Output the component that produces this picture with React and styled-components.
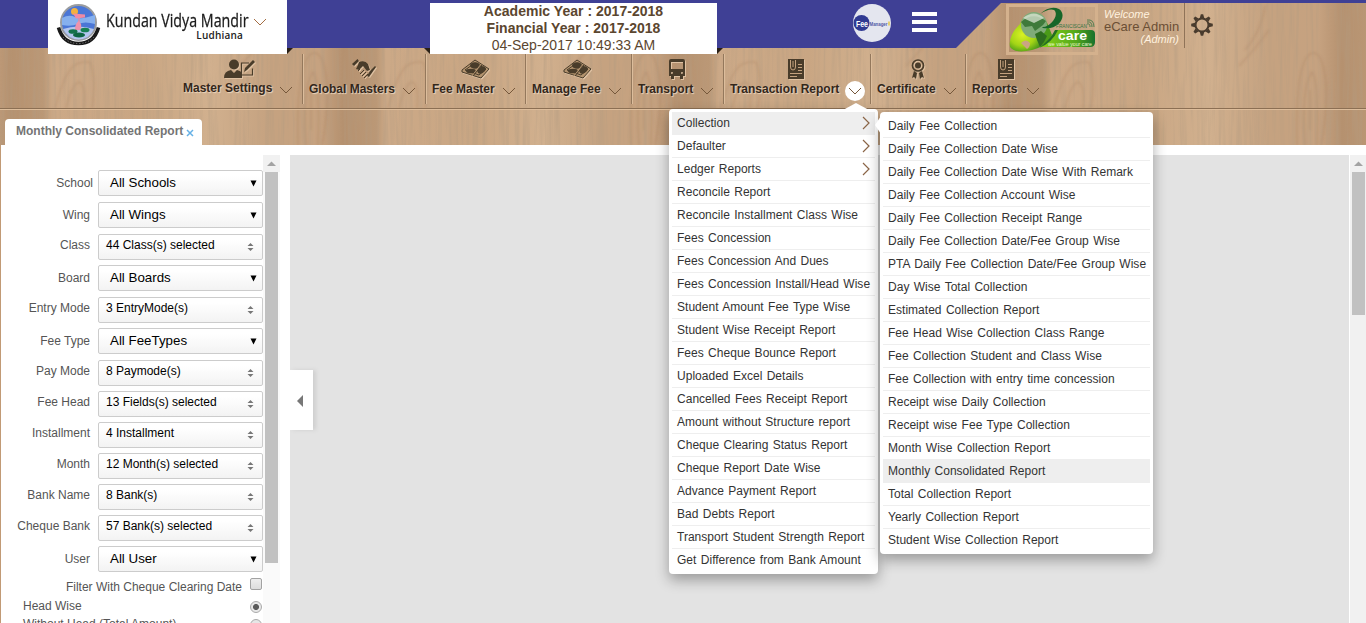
import React from "react";
import styled, { createGlobalStyle, css } from "styled-components";

const GlobalStyle = createGlobalStyle`
  * { box-sizing: border-box; }
  html, body { margin: 0; background: #fff; overflow: hidden; }
  body { font: 12px "Liberation Sans", Arial, sans-serif; color: #333; }
`;

const Page = styled.div`
  width: 1366px;
  height: 623px;
  display: flex;
  flex-direction: column;
  overflow: hidden;
`;
const Header = styled.header`
  position: relative;
  z-index: 2;
  flex: none;
  height: 145px;
  background: #c6a585;
`;
const WoodArt = styled.svg`
  position: absolute;
  inset: 0;
  z-index: -1;
`;
const TopBar = styled.div`
  display: flex;
  height: 48px;
`;
const cornerFold = css`
  content: "";
  position: absolute;
  bottom: 0;
  border-top: 6px solid #2b2117;
`;
const SchoolBox = styled.div`
  position: relative;
  flex: none;
  display: flex;
  margin-left: 48px;
  width: 239px;
  height: 54px;
  padding: 3px 0 0 8px;
  background: #fff;
  > svg { flex: none; }
  &::after { ${cornerFold} left: 100%; border-right: 6px solid transparent; }
`;
const SchoolText = styled.div`
  flex: none;
  width: 138px;
  margin-left: 5px;
  padding-top: 5px;
`;
const SchoolName = styled.div`
  font: 19px/24px "Open Sans", sans-serif;
  width: 184px;
  transform: scaleX(${(p) => p.$squeeze});
  transform-origin: left;
  white-space: nowrap;
  color: #1c1c1c;
  -webkit-text-stroke: 0.3px #1c1c1c;
`;
const City = styled.div`
  margin-top: -3px;
  padding-right: 1px;
  text-align: right;
  font: 600 10px/13px "Open Sans", sans-serif;
  letter-spacing: 0.2px;
  color: #222;
`;
const SchoolChevron = styled.div`
  padding: 12px 0 0 9px;
`;
const YearBox = styled.div`
  position: relative;
  flex: none;
  margin: 3px 0 0 143px;
  width: 287px;
  height: 51px;
  background: #fff;
  text-align: center;
  font-size: 14px;
  line-height: 17px;
  color: #5b462f;
  &::before { ${cornerFold} right: 100%; border-left: 6px solid transparent; }
  &::after { ${cornerFold} left: 100%; border-right: 6px solid transparent; }
`;
const YearLine = styled.div`
  font-weight: ${(p) => (p.$strong ? "bold" : "normal")};
  letter-spacing: ${(p) => (p.$strong ? "0.02px" : "0")};
`;
const Badge = styled.div`
  flex: none;
  margin: 4px 0 0 136px;
  height: 38px;
`;
const Burger = styled.div`
  flex: none;
  display: flex;
  flex-direction: column;
  gap: 4px;
  margin: 12px 0 0 21px;
  width: 25px;
`;
const BurgerLine = styled.div`
  height: 4px;
  background: #fff;
`;
const CareFrame = styled.div`
  flex: none;
  margin: 4px 0 0 69px;
  width: 92px;
  height: 51px;
  border: 3px solid #d4b18d;
`;
const Welcome = styled.div`
  flex: none;
  margin-left: 6px;
  padding-top: 9px;
  width: 75px;
  font-size: 11px;
  line-height: 11px;
  font-style: italic;
  color: #fff1df;
`;
const UserName = styled.div`
  font-size: 13px;
  line-height: 13px;
  font-style: normal;
  white-space: nowrap;
  color: #6b4f35;
`;
const Role = styled.div`
  text-align: right;
  line-height: 12px;
`;
const GearCell = styled.div`
  flex: none;
  margin: 3px 0 0 5px;
  height: 45px;
  padding: 11px 0 0 6px;
  border-left: 1px solid #8f7358;
`;
const Nav = styled.nav`
  display: flex;
  height: 62px;
  padding: 6px 0 0 177px;
  border-bottom: 1px solid #ddbd9b;
  box-shadow: inset 0 -1px #8c6f53;
`;
const NavItem = styled.div`
  position: relative;
  flex: none;
  width: ${(p) => p.$width}px;
  height: 50px;
  padding: 5px 0 0 6px;
  border-right: 1px solid ${(p) => (p.$last ? "transparent" : "#94785c")};
  box-shadow: ${(p) => (p.$last ? "none" : "1px 0 #dcbd9c")};
`;
const NavIcon = styled.div`
  height: 22px;
  padding-left: ${(p) => p.$indent}px;
  svg { display: block; filter: drop-shadow(1px 1px 0 #dfc2a3); }
`;
const NavRow = styled.div`
  display: flex;
  align-items: center;
  margin-top: ${(p) => (p.$raised ? "0" : "1px")};
`;
const NavLabel = styled.span`
  flex: none;
  width: ${(p) => p.$width}px;
  white-space: nowrap;
  font-weight: bold;
  line-height: 15px;
  color: #33271b;
  text-shadow: 1px 1px 1px #ecd6bd;
`;
const NavChevron = styled.div`
  flex: none;
  display: flex;
  justify-content: center;
  align-items: center;
  width: 20px;
  height: 20px;
  margin: -3px 0 -5px 4px;
  border-radius: 50%;
  background: ${(p) => (p.$open ? "#fff" : "none")};
`;
const TabStrip = styled.div`
  display: flex;
  padding: 9px 0 0 5px;
`;
const Tab = styled.div`
  height: 26px;
  width: 197px;
  padding: 5px 0 0 11px;
  border-radius: 4px 4px 0 0;
  background: #fff;
  font-weight: bold;
  line-height: 14px;
  color: #747474;
  white-space: nowrap;
`;
const TabClose = styled.svg`
  margin-left: 3px;
  vertical-align: -2px;
`;
const Body = styled.main`
  display: flex;
  flex: 1;
  min-height: 0;
  padding-top: 10px;
  border-left: 1px solid #c19a75;
`;
const Sidebar = styled.aside`
  flex: none;
  width: 262px;
  padding-top: 15px;
  overflow: hidden;
`;
const Field = styled.div`
  display: flex;
  height: 26px;
  margin-bottom: ${(p) => p.$gap}px;
`;
const FieldLabel = styled.label`
  width: 97px;
  padding-right: ${(p) => p.$inset}px;
  text-align: right;
  line-height: ${(p) => (p.$native ? 27 : 23)}px;
  white-space: nowrap;
  color: #555;
`;
const Select = styled.div`
  display: flex;
  justify-content: space-between;
  width: 165px;
  height: 26px;
  border: 1px solid #ccc;
  border-radius: 2px;
  background: linear-gradient(#fff 20%, #f3f3f3);
  color: #000;
  white-space: nowrap;
  ${(p) =>
    p.$native
      ? css`padding: 0 5px 0 11px; font-size: 13.33px; line-height: 24px;`
      : css`padding: 0 8px 0 7px; font-size: 12px; line-height: 21px;`}
`;
const Mark = styled.svg`
  margin-top: ${(p) => p.$top}px;
`;
const OptionRow = styled.div`
  display: flex;
  justify-content: ${(p) => (p.$end ? "flex-end" : "space-between")};
  height: ${(p) => p.$height}px;
  padding: 0 1px 0 22px;
  line-height: ${(p) => (p.$end ? 15 : 14)}px;
  color: #555;
`;
const Checkbox = styled.span`
  width: 12px;
  height: 12px;
  margin: -2px 0 0 8px;
  border: 1px solid #a2a2a2;
  border-radius: 2px;
  background: linear-gradient(#eee, #ddd);
`;
const Radio = styled.span`
  width: 12px;
  height: 12px;
  margin-top: 2px;
  border: 1px solid #aaa;
  border-radius: 50%;
  background: ${(p) => (p.$on ? "radial-gradient(#5b5b5b 0 2.6px, #e8e8e8 3.4px)" : "#e6e6e6")};
`;
const Scrollbar = styled.div`
  flex: none;
  width: 17px;
  padding: 0 2px;
  background: ${(p) => p.$track};
`;
const ScrollCap = styled.div`
  height: 17px;
  margin: 0 -2px;
  padding: 6px 0 0 4px;
  background: #f1f1f1;
  svg { display: block; }
`;
const ScrollThumb = styled.div`
  height: ${(p) => p.$height}px;
  background: #c1c1c1;
`;
const Canvas = styled.section`
  flex: none;
  margin: 0 1px 0 10px;
  width: 1059px;
  padding-top: 215px;
  background: #e3e3e3;
`;
const Collapse = styled.button`
  display: block;
  width: 23px;
  height: 60px;
  padding: 0 0 0 7px;
  border: 0;
  background: #fff;
  box-shadow: 3px 0 4px #cfcfcf;
  clip-path: inset(-6px -8px -6px 0);
  text-align: left;
  svg { vertical-align: middle; }
`;
const Menu = styled.div`
  position: absolute;
  z-index: ${(p) => p.$layer};
  left: ${(p) => p.$x}px;
  top: ${(p) => p.$y}px;
  width: ${(p) => p.$width}px;
  padding: 3px 3px 2px;
  border-radius: 4px;
  background: #fff;
  box-shadow: 0 6px 14px rgba(0, 0, 0, 0.32);
`;
const MenuItem = styled.div`
  display: flex;
  justify-content: space-between;
  height: 23px;
  padding: 0 5px;
  border-bottom: 1px solid ${(p) => (p.$last ? "transparent" : "#eee")};
  background: ${(p) => (p.$active ? "#eee" : "transparent")};
  line-height: 22px;
  letter-spacing: 0.02px;
  word-spacing: 1px;
  white-space: nowrap;
  color: #333;
`;
const Pointer = styled.svg`
  position: absolute;
  left: ${(p) => p.$x}px;
  top: ${(p) => p.$y}px;
`;

const Wood = () => (
  <WoodArt width="1366" height="145">
    <defs>
      <linearGradient id="planks" gradientUnits="userSpaceOnUse" x1="10" x2="343" y1="0" y2="0" spreadMethod="repeat">
        <stop offset="0" stopColor="#b5916f" />
        <stop offset=".1" stopColor="#bb9876" />
        <stop offset=".13" stopColor="#cca987" />
        <stop offset=".4" stopColor="#c9a683" />
        <stop offset=".6" stopColor="#d1b08e" />
        <stop offset=".78" stopColor="#c5a280" />
        <stop offset=".93" stopColor="#c6a280" />
        <stop offset="1" stopColor="#b5916f" />
      </linearGradient>
      <filter id="grain" x="0" y="0" width="100%" height="100%">
        <feTurbulence type="fractalNoise" baseFrequency="0.3 0.012" numOctaves="3" seed="7" />
        <feColorMatrix values="0 0 0 0 .45  0 0 0 0 .33  0 0 0 0 .22  1.1 0 0 0 -.46" />
      </filter>
      <filter id="soft"><feGaussianBlur stdDeviation="1" /></filter>
      <pattern id="knots" width="333" height="145" patternUnits="userSpaceOnUse">
        <g fill="none" stroke="#94704f" strokeOpacity=".2" strokeWidth="2" filter="url(#soft)">
          <path d="M55 108Q66 66 79 63T91 65Q96 80 92 108M66 108Q72 84 79 82Q86 84 84 108" />
          <path d="M298 145Q296 65 311 54Q322 48 326 76T322 145M306 145Q302 87 313 72Q320 80 318 145M311 130V90" />
          <path d="M246 50Q262 32 266 6M240 66Q257 48 270 30" />
        </g>
      </pattern>
    </defs>
    <rect width="1366" height="145" fill="url(#planks)" />
    <rect width="1366" height="145" fill="url(#knots)" />
    <rect width="1366" height="145" filter="url(#grain)" />
    <path d="M0 0H1366V3H1001L956 48H0Z" fill="#3f4095" />
  </WoodArt>
);

const Chevron = ({ color = "#76583b" }) => (
  <svg width="14" height="14" viewBox="0 0 14 14">
    <path d="M1 4l6 6 6-6" fill="none" stroke={color} strokeWidth="1" />
  </svg>
);

const Crest = () => (
  <svg width="45" height="44" viewBox="0 0 45 44">
    <circle cx="22.5" cy="19.500" r="17.500" fill="#4a76d6" stroke="#9a9c9f" strokeWidth="2" />
    <path d="M6 15q7-4 13-1t20-2v9q-10-3-17 0T6 22Z" fill="#86b0ee" />
    <path d="M7 26q15-5 31 0-4 10-15.500 10.500Q12 36 7 26Z" fill="#b4c6ee" />
    <circle cx="18.500" cy="8.500" r="3.500" fill="#f2b13e" />
    <path d="M17 10.500l12 1v3l-9 1Z" fill="#f08aa4" />
    <path d="M23 15v10" stroke="#e18aa4" strokeWidth="1.500" />
    <path d="M19 27q0-7 4-9 4 4 1 9Z" fill="#ef93ac" />
    <ellipse cx="17" cy="28.500" rx="4.500" ry="2.300" fill="#13714b" />
    <ellipse cx="29" cy="27" rx="4.500" ry="2.300" fill="#178153" />
    <ellipse cx="23" cy="32" rx="6" ry="2.400" fill="#0e6643" />
    <path d="M2.500 24.500Q7 40.500 22.500 40.500T42.500 24.500" fill="none" stroke="#191919" strokeWidth="3.600" />
    <path d="M7 34q6 6.500 15.500 6.500T38 34" fill="none" stroke="#aaa" strokeWidth=".8" strokeDasharray="1 2" />
  </svg>
);

const FeeBadge = () => (
  <svg width="38" height="38" viewBox="0 0 38 38">
    <circle cx="19" cy="19" r="19" fill="#e4e6ef" />
    <circle cx="8.500" cy="19" r="8" fill="#303a92" />
    <text x="3" y="22.500" fontFamily="Liberation Sans" fontWeight="bold" fontSize="9" textLength="12" lengthAdjust="spacingAndGlyphs" fill="#fff">Fee</text>
    <text x="16.500" y="22" fontFamily="Liberation Sans" fontWeight="bold" fontSize="6" textLength="18" lengthAdjust="spacingAndGlyphs" fill="#5158a5">Manager</text>
    <path d="M36 17.500v4" stroke="#e6c648" strokeWidth="1.500" fill="none" />
  </svg>
);

const CareLogo = () => (
  <svg width="86" height="45" viewBox="0 0 86 45">
    <defs>
      <radialGradient id="leaf" cx=".3" cy=".55">
        <stop stopColor="#d9f224" /><stop offset=".6" stopColor="#a3d416" /><stop offset="1" stopColor="#4a9b18" />
      </radialGradient>
      <linearGradient id="strip">
        <stop stopColor="#8bd414" /><stop offset=".65" stopColor="#54a81c" /><stop offset="1" stopColor="#18712d" />
      </linearGradient>
    </defs>
    <path d="M48 23H82Q86 23 86 27V35Q86 40 81 40H31Z" fill="url(#strip)" />
    <path d="M1 40Q-1 29 11 17C16 4 34 4 39 18L43 28Q38 39 23 43 6 47 1 40Z" fill="url(#leaf)" />
    <circle cx="25" cy="18" r="13" fill="#7fab78" />
    <path d="M12 15Q24 4 37 14L34 18 26 24 23 19 16 20Z" fill="#3f7a3b" />
    <path d="M14 11Q25 2 35 11L25 16Z" fill="#dce6d5" opacity=".75" />
    <path d="M26 27L32 24 38 29 35 35 31 40 28 33Z" fill="#2d6d20" />
    <path d="M34 21C50 24 59 8 50 2Q41-2 31 7 40 1 45 3C51 8 41 21 33 20Z" fill="#176629" />
    <path d="M49 23Q43 36 30 41 42 32 46 23Z" fill="#236d23" />
    <path d="M12 36q5-5 9 0 0 4-3 6Z" fill="#caa583" />
    <text x="47" y="20.500" fontFamily="Liberation Sans" fontSize="5" textLength="31" lengthAdjust="spacingAndGlyphs" fill="#347442">FRANCISCAN</text>
    <g fill="none" stroke="#347442" strokeWidth=".8"><path d="M78 17q3-1 3 3M78 15q5-1 5 5M78 13q7-1 7 7" /></g>
    <text x="49" y="33" fontFamily="Liberation Sans" fontWeight="bold" fontSize="13" textLength="29" lengthAdjust="spacingAndGlyphs" fill="#fff">care</text>
    <text x="39" y="38.500" fontFamily="Liberation Sans" fontSize="4.500" textLength="44" lengthAdjust="spacingAndGlyphs" fill="#e8f9cf">we value your care</text>
  </svg>
);

const Gear = () => (
  <svg width="22" height="22" viewBox="-11 -11 22 22">
    <circle r="6.500" fill="none" stroke="#493b2d" strokeWidth="2" />
    {[0, 45, 90, 135, 180, 225, 270, 315].map((a) => (
      <path key={a} d="M-2.200-7L-1.200-10.800H1.200L2.200-7Z" fill="#493b2d" transform={`rotate(${a})`} />
    ))}
  </svg>
);

const ink = "#493c2a";
const UserEdit = () => (
  <svg width="32" height="20" viewBox="0 0 32 20" fill={ink}>
    <circle cx="10" cy="5.500" r="5" />
    <path d="M0 19q0-7 7-8l3 3 3-3q4 1 5 3v5Z" />
    <path d="M28.500 9.500v6.500H17.500v-12H25" fill="none" stroke={ink} strokeWidth="1.200" />
    <path d="M20 13l1-4 8-8 2 2-8 8Z" />
  </svg>
);
const Handshake = () => (
  <svg width="24" height="20" viewBox="0 0 24 20" fill={ink}>
    <path d="M0 5L5.500 0 7 2 2 7ZM7 3q6-2 9 2l2 6-3 1-4-5-4 4-3-1 2-4Z" />
    <path d="M6 12l2-2M8 15l4-4M10 17l4-4M12 19l4-4" fill="none" stroke={ink} strokeWidth="1" />
    <path d="M15 17l3-5 5-5 1 1-7 10Z" />
  </svg>
);
const Money = () => (
  <svg width="29" height="20" viewBox="0 0 29 20">
    <g fill="none" stroke={ink}>
      <path d="M1 11L14 1l14 9-8 9-19-6Z" fill="#b4946f" />
      <path d="M4 11L14 4l11 6-7 6Z" />
    </g>
    <ellipse cx="14" cy="6.500" rx="5" ry="3.200" fill={ink} />
    <ellipse cx="20.500" cy="11" rx="4.500" ry="3" fill={ink} transform="rotate(-35 20.500 11)" />
    <ellipse cx="10" cy="12" rx="5" ry="2.300" fill={ink} />
    <path d="M11 17l9-12" stroke="#b4946f" />
    <path d="M12 17l9-11" stroke={ink} />
  </svg>
);
const Bus = () => (
  <svg width="18" height="20" viewBox="0 0 18 20" fill={ink}>
    <path fillRule="evenodd" d="M3 0h12q2 0 2 2v15H1V2q0-2 2-2ZM3 3v7h12V3ZM4 13a1 1 0 100 2 1 1 0 000-2ZM14 13a1 1 0 100 2 1 1 0 000-2Z" />
    <path d="M3 17h3v3H3ZM12 17h3v3h-3Z" />
  </svg>
);
const Report = () => (
  <svg width="16" height="20" viewBox="0 0 16 20">
    <path d="M0 0h16v20H0Z" fill={ink} />
    <path d="M2.500 1v7q0 3 2.500 3t2.500-3V1M5 2v6M10 5.500h4M10 8.500h4M10 11.500h4M2 14.500h12M2 17.500h7" stroke="#c3a17d" fill="none" />
  </svg>
);
const Ribbon = () => (
  <svg width="14" height="20" viewBox="0 0 14 20">
    <circle cx="7" cy="6.500" r="5.500" fill="none" stroke={ink} strokeWidth="1.700" />
    <circle cx="7" cy="6.500" r="3" fill={ink} />
    <path d="M3 12l3 2-1 6-2-2-2 1ZM11 12l-3 2 1 6 2-2 2 1Z" fill={ink} />
  </svg>
);

const nav = [
  { label: "Master Settings", width: 126, text: 89, indent: 41, Icon: UserEdit, raised: true },
  { label: "Global Masters", width: 123, text: 86, indent: 43, Icon: Handshake },
  { label: "Fee Master", width: 100, text: 63, indent: 29, Icon: Money },
  { label: "Manage Fee", width: 106, text: 69, indent: 31, Icon: Money },
  { label: "Transport", width: 92, text: 55, indent: 30, Icon: Bus },
  { label: "Transaction Report", width: 147, text: 111, indent: 58, Icon: Report, open: true },
  { label: "Certificate", width: 95, text: 59, indent: 34, Icon: Ribbon },
  { label: "Reports", width: 90, text: 47, indent: 26, Icon: Report },
];

const fields = [
  ["School", "All Schools", true, 6], ["Wing", "All Wings", true, 6],
  ["Class", "44 Class(s) selected", false, 5], ["Board", "All Boards", true, 6],
  ["Entry Mode", "3 EntryMode(s)", false, 5], ["Fee Type", "All FeeTypes", true, 6],
  ["Pay Mode", "8 Paymode(s)", false, 5], ["Fee Head", "13 Fields(s) selected", false, 5],
  ["Installment", "4 Installment", false, 5], ["Month", "12 Month(s) selected", false, 5],
  ["Bank Name", "8 Bank(s)", false, 5], ["Cheque Bank", "57 Bank(s) selected", false, 5],
  ["User", "All User", true, 8],
];

const reportMenu = [
  "Collection", "Defaulter", "Ledger Reports", "Reconcile Report", "Reconcile Installment Class Wise",
  "Fees Concession", "Fees Concession And Dues", "Fees Concession Install/Head Wise",
  "Student Amount Fee Type Wise", "Student Wise Receipt Report", "Fees Cheque Bounce Report",
  "Uploaded Excel Details", "Cancelled Fees Receipt Report", "Amount without Structure report",
  "Cheque Clearing Status Report", "Cheque Report Date Wise", "Advance Payment Report",
  "Bad Debts Report", "Transport Student Strength Report", "Get Difference from Bank Amount",
];

const collectionMenu = [
  "Daily Fee Collection", "Daily Fee Collection Date Wise", "Daily Fee Collection Date Wise With Remark",
  "Daily Fee Collection Account Wise", "Daily Fee Collection Receipt Range",
  "Daily Fee Collection Date/Fee Group Wise", "PTA Daily Fee Collection Date/Fee Group Wise",
  "Day Wise Total Collection", "Estimated Collection Report", "Fee Head Wise Collection Class Range",
  "Fee Collection Student and Class Wise", "Fee Collection with entry time concession",
  "Receipt wise Daily Collection", "Receipt wise Fee Type Collection", "Month Wise Collection Report",
  "Monthly Consolidated Report", "Total Collection Report", "Yearly Collection Report",
  "Student Wise Collection Report",
];

const SelectMark = ({ native }) =>
  native ? (
    <Mark $top={9} width="7" height="7" viewBox="0 0 7 7"><path d="M.5 .5h6L3.500 6.500Z" fill="#000" /></Mark>
  ) : (
    <Mark $top={8} width="7" height="8" viewBox="0 0 7 8"><path d="M.5 3L3.500 0l3 3ZM.5 5h6l-3 3Z" fill="#777" /></Mark>
  );

const Bar = ({ thumb, track }) => (
  <Scrollbar $track={track}>
    <ScrollCap><svg width="9" height="6"><path d="M0 5L4.500.5 9 5Z" fill="#a3a3a3" /></svg></ScrollCap>
    <ScrollThumb $height={thumb} />
  </Scrollbar>
);

export default function App() {
  return (
    <Page>
      <GlobalStyle />
      <Header>
        <Wood />
        <TopBar>
          <SchoolBox>
            <Crest />
            <SchoolText>
              <SchoolName $squeeze={0.75}>Kundan Vidya Mandir</SchoolName>
              <City>Ludhiana</City>
            </SchoolText>
            <SchoolChevron><Chevron color="#a36d43" /></SchoolChevron>
          </SchoolBox>
          <YearBox>
            <YearLine $strong>Academic Year : 2017-2018</YearLine>
            <YearLine $strong>Financial Year : 2017-2018</YearLine>
            <YearLine>04-Sep-2017 10:49:33 AM</YearLine>
          </YearBox>
          <Badge><FeeBadge /></Badge>
          <Burger><BurgerLine /><BurgerLine /><BurgerLine /></Burger>
          <CareFrame><CareLogo /></CareFrame>
          <Welcome>
            Welcome
            <UserName>eCare Admin</UserName>
            <Role>(Admin)</Role>
          </Welcome>
          <GearCell><Gear /></GearCell>
        </TopBar>
        <Nav>
          {nav.map(({ label, width, text, indent, Icon, raised, open }) => (
            <NavItem key={label} $width={width} $last={label === "Reports"}>
              <NavIcon $indent={indent}><Icon /></NavIcon>
              <NavRow $raised={raised}>
                <NavLabel $width={text}>{label}</NavLabel>
                <NavChevron $open={open}><Chevron /></NavChevron>
              </NavRow>
            </NavItem>
          ))}
        </Nav>
        <TabStrip>
          <Tab>
            Monthly Consolidated Report
            <TabClose width="8" height="8"><path d="M1 1l6 6M7 1L1 7" stroke="#66b1e6" strokeWidth="1.500" /></TabClose>
          </Tab>
        </TabStrip>
      </Header>
      <Body>
        <Sidebar>
          {fields.map(([label, value, native, gap]) => (
            <Field key={label} $gap={gap}>
              <FieldLabel $native={native} $inset={label === "School" ? 5 : 8}>{label}</FieldLabel>
              <Select $native={native}>{value}<SelectMark native={native} /></Select>
            </Field>
          ))}
          <OptionRow $end $height={19}>Filter With Cheque Clearing Date<Checkbox /></OptionRow>
          <OptionRow $height={18}>Head Wise<Radio $on /></OptionRow>
          <OptionRow $height={18}>Without Head (Total Amount)<Radio /></OptionRow>
        </Sidebar>
        <Bar thumb={391} track="#fafafa" />
        <Canvas>
          <Collapse><svg width="6" height="12"><path d="M6 0v12L0 6Z" fill="#777" /></svg></Collapse>
        </Canvas>
        <Bar thumb={143} track="#f1f1f1" />
      </Body>
      <Menu $layer={3} $x={669} $y={109} $width={209}>
        <Pointer $x={174} $y={-6} width="26" height="7"><path d="M0 7L13 0l13 7Z" fill="#fff" /></Pointer>
        {reportMenu.map((item, i) => (
          <MenuItem key={item} $active={i === 0} $last={i === reportMenu.length - 1}>
            {item}
            {i < 3 && <Mark $top={4} width="8" height="14"><path d="M1 1l6 6-6 6" fill="none" stroke="#8b6547" strokeWidth="1.200" /></Mark>}
          </MenuItem>
        ))}
      </Menu>
      <Menu $layer={4} $x={880} $y={112} $width={273}>
        <Pointer $x={-5} $y={4} width="6" height="18"><path d="M6 0v18L0 9Z" fill="#fff" /></Pointer>
        {collectionMenu.map((item, i) => (
          <MenuItem key={item} $active={item === "Monthly Consolidated Report"} $last={i === collectionMenu.length - 1}>
            {item}
          </MenuItem>
        ))}
      </Menu>
    </Page>
  );
}
